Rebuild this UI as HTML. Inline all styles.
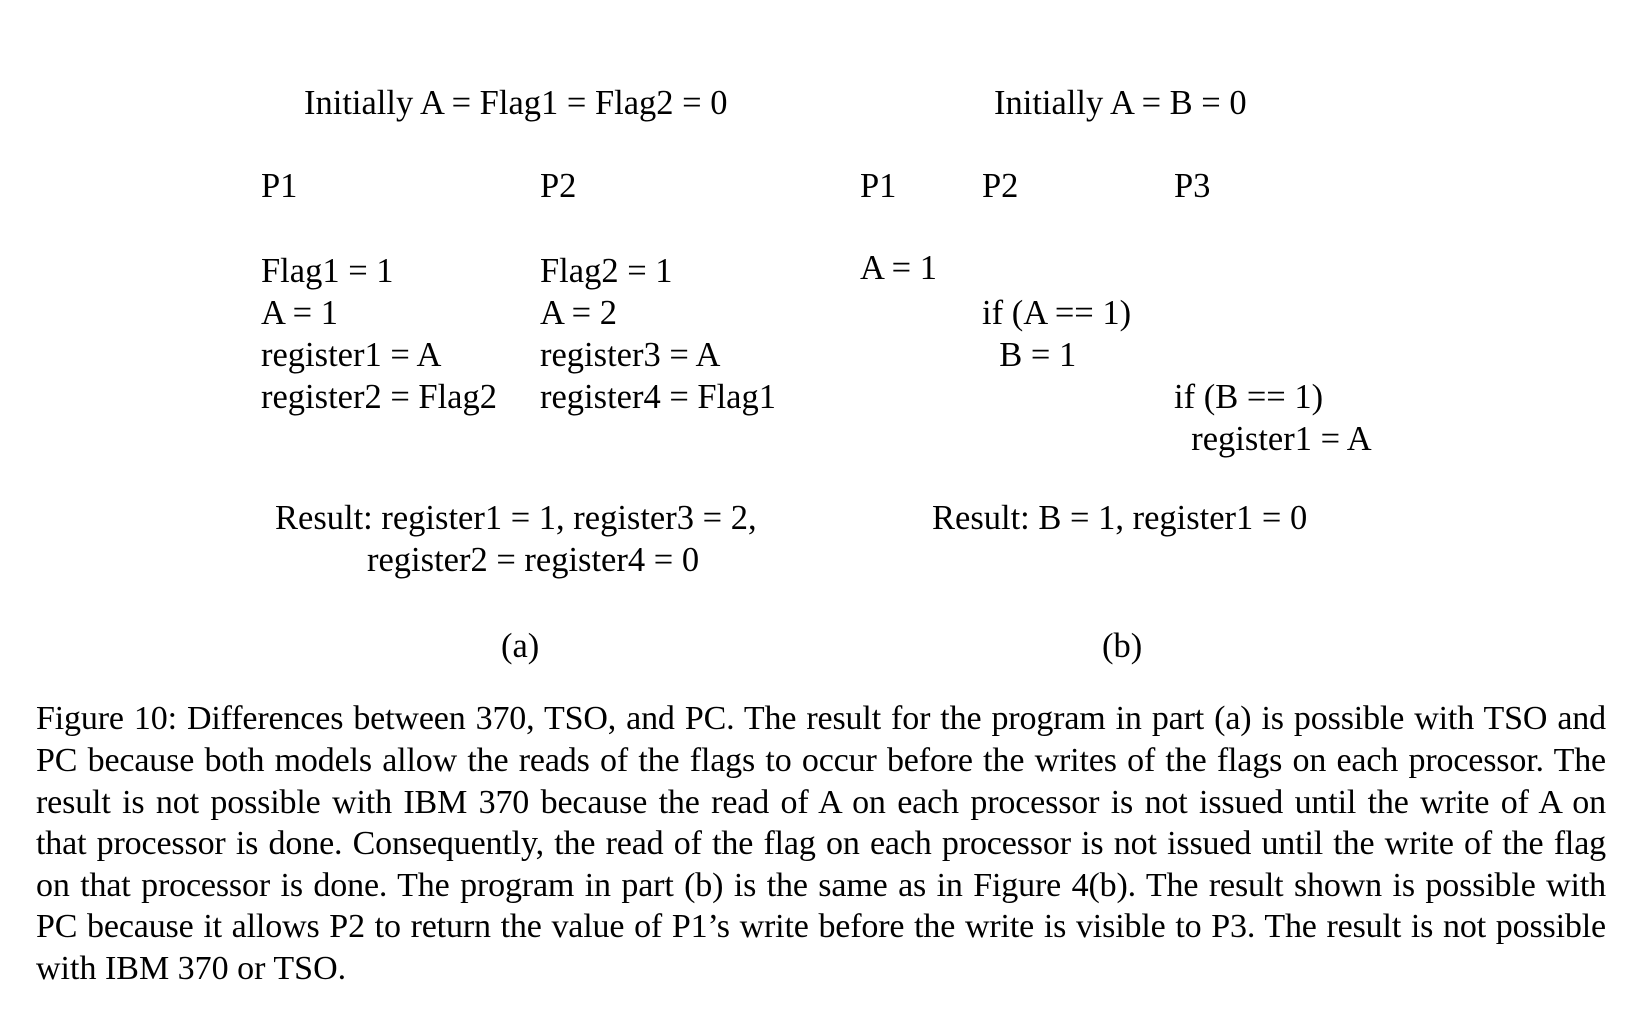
<!DOCTYPE html><html><head><style>
body{margin:0;width:1628px;height:1018px;background:#fff;position:relative;overflow:hidden;font-family:"Liberation Serif",serif;font-size:34.5px;color:#000}
.t{position:absolute;line-height:36px;white-space:pre}
.c{position:absolute;left:36px;width:1570px;line-height:36px;font-size:34px;letter-spacing:-0.15px;text-align:justify;text-align-last:justify;white-space:nowrap}
</style></head><body>
<div class="t" style="left:304px;top:85px">Initially A = Flag1 = Flag2 = 0</div>
<div class="t" style="left:994px;top:85px">Initially A = B = 0</div>
<div class="t" style="left:261px;top:168px">P1</div>
<div class="t" style="left:540px;top:168px">P2</div>
<div class="t" style="left:860px;top:168px">P1</div>
<div class="t" style="left:982px;top:168px">P2</div>
<div class="t" style="left:1174px;top:168px">P3</div>
<div class="t" style="left:261px;top:250px;line-height:42px">Flag1 = 1
A = 1
register1 = A
register2 = Flag2</div>
<div class="t" style="left:540px;top:250px;line-height:42px">Flag2 = 1
A = 2
register3 = A
register4 = Flag1</div>
<div class="t" style="left:860px;top:250px">A = 1</div>
<div class="t" style="left:982px;top:292px;line-height:42px">if (A == 1)
  B = 1</div>
<div class="t" style="left:1174px;top:376px;line-height:42px">if (B == 1)
  register1 = A</div>
<div class="t" style="left:275px;top:500px">Result: register1 = 1, register3 = 2,</div>
<div class="t" style="left:367px;top:542px">register2 = register4 = 0</div>
<div class="t" style="left:932px;top:500px">Result: B = 1, register1 = 0</div>
<div class="t" style="left:501px;top:628px">(a)</div>
<div class="t" style="left:1102px;top:628px">(b)</div>
<div class="c" style="top:701px">Figure 10: Differences between 370, TSO, and PC. The result for the program in part (a) is possible with TSO and</div>
<div class="c" style="top:743px">PC because both models allow the reads of the flags to occur before the writes of the flags on each processor. The</div>
<div class="c" style="top:785px">result is not possible with IBM 370 because the read of A on each processor is not issued until the write of A on</div>
<div class="c" style="top:826px">that processor is done. Consequently, the read of the flag on each processor is not issued until the write of the flag</div>
<div class="c" style="top:868px">on that processor is done. The program in part (b) is the same as in Figure 4(b). The result shown is possible with</div>
<div class="c" style="top:909px">PC because it allows P2 to return the value of P1’s write before the write is visible to P3. The result is not possible</div>
<div class="t" style="left:36px;top:951px;font-size:34px">with IBM 370 or TSO.</div>
</body></html>
